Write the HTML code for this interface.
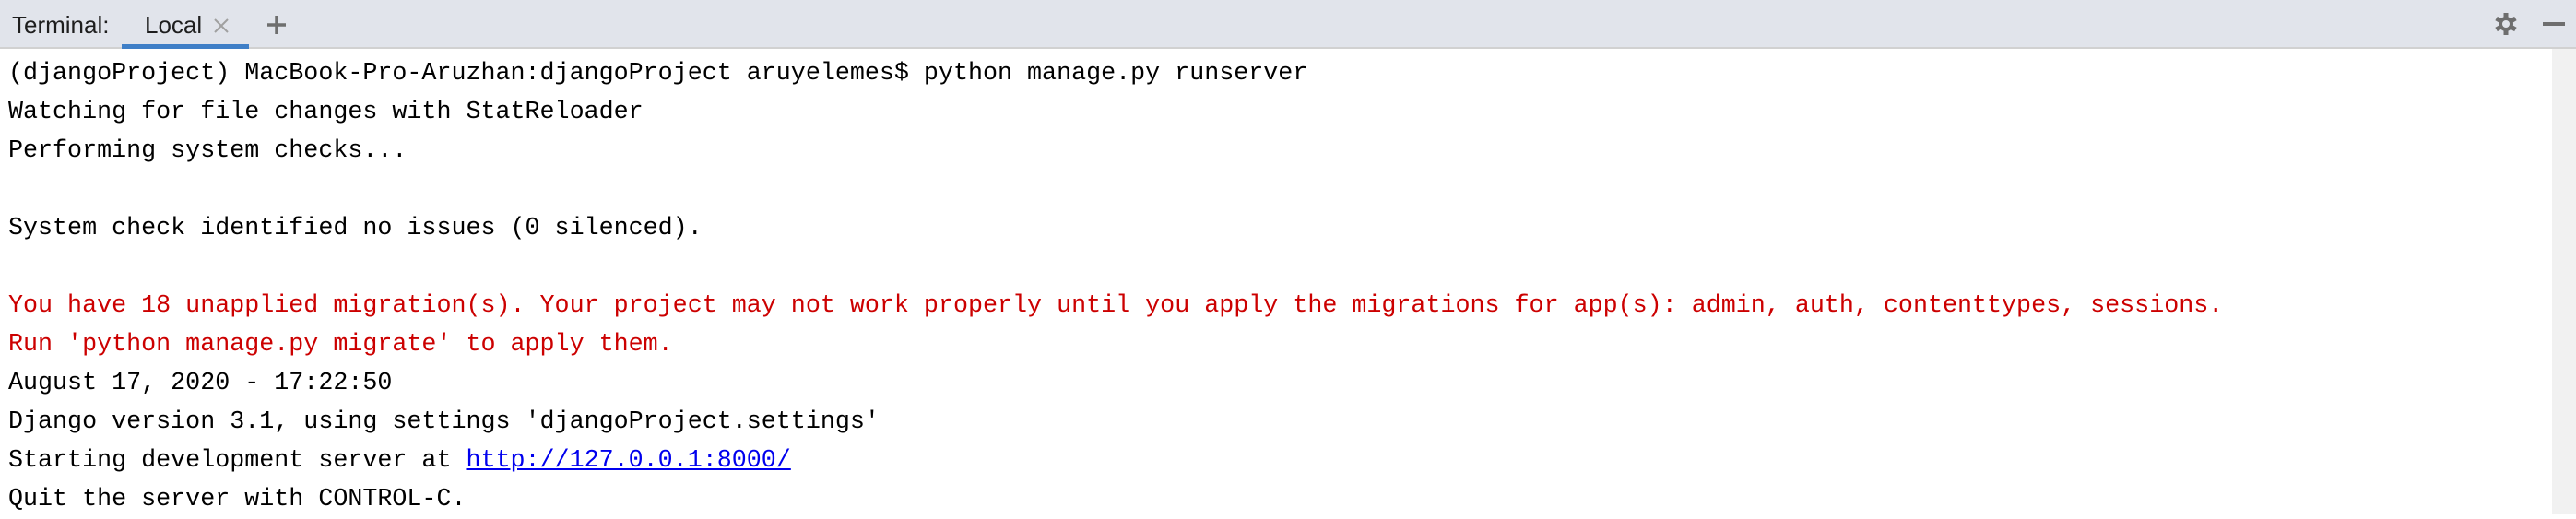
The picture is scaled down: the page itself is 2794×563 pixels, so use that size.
<!DOCTYPE html>
<html><head><meta charset="utf-8"><style>
html,body{margin:0;padding:0;width:2794px;height:558px;overflow:hidden;background:#fff;}
.bar{position:absolute;left:0;top:0;width:2794px;height:51px;background:#e1e4eb;border-bottom:2px solid #d1d1d1;font-family:"Liberation Sans",sans-serif;font-size:26px;color:#1e1e1e;}
.bar span{position:absolute;top:12px;}
.ul{position:absolute;left:132px;top:48px;width:138px;height:5px;background:#3f7fc7;}
.sb{position:absolute;left:2768px;top:53px;width:26px;height:505px;background:#f1f1f1;}
pre{position:absolute;left:9px;top:59px;margin:0;font-family:"Liberation Mono",monospace;font-size:26.7px;line-height:42px;color:#000;}
.r{color:#cc0000;}
a{color:#0000ee;text-decoration:underline;}
</style></head><body>
<div class="bar">
<span style="left:13px">Terminal:</span>
<span style="left:157px">Local</span>
<svg style="position:absolute;left:232px;top:20px" width="16" height="16"><path d="M1 1L15 15M15 1L1 15" stroke="#a0a0a0" stroke-width="2"/></svg>
<svg style="position:absolute;left:290px;top:17px" width="20" height="20"><path d="M10 0V20M0 10H20" stroke="#6e6e6e" stroke-width="3.5"/></svg>
<svg style="position:absolute;left:2705px;top:13px" width="26" height="26" viewBox="0 0 26 26"><g fill="#6e6e6e"><circle cx="13" cy="13" r="8"/><g stroke="#6e6e6e" stroke-width="5"><path d="M13 1V25M2.6 7L23.4 19M2.6 19L23.4 7"/></g></g><circle cx="13" cy="13" r="4" fill="#e1e4eb"/></svg>
<div style="position:absolute;left:2758px;top:24px;width:24px;height:4px;background:#6e6e6e"></div>
</div>
<div class="ul"></div>
<div class="sb"></div>
<pre>(djangoProject) MacBook-Pro-Aruzhan:djangoProject aruyelemes$ python manage.py runserver
Watching for file changes with StatReloader
Performing system checks...

System check identified no issues (0 silenced).

<span class="r">You have 18 unapplied migration(s). Your project may not work properly until you apply the migrations for app(s): admin, auth, contenttypes, sessions.</span>
<span class="r">Run 'python manage.py migrate' to apply them.</span>
August 17, 2020 - 17:22:50
Django version 3.1, using settings 'djangoProject.settings'
Starting development server at <a>http://127.0.0.1:8000/</a>
Quit the server with CONTROL-C.</pre>
</body></html>
